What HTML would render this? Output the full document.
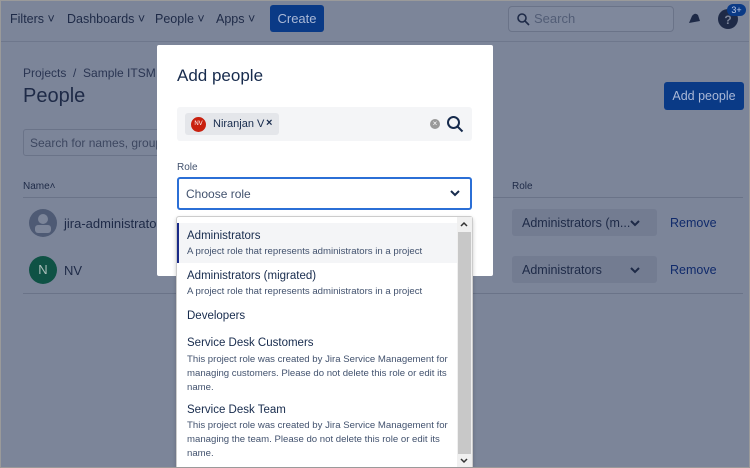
<!DOCTYPE html>
<html><head><style>
*{box-sizing:border-box;margin:0;padding:0}
html,body{width:750px;height:468px;overflow:hidden}
body{background:#7c8599;font-family:"Liberation Sans",sans-serif;color:#172b4d;position:relative}
.a{position:absolute;white-space:nowrap}
.nav{font-size:12.5px;color:#1e2a47}
.dim{color:#1e2a47}
.d{font-size:9.6px;color:#42526e}
</style></head><body>
<div class="a" style="left:0;top:0;width:750px;height:468px;border:1px solid #9a9a9a;z-index:9"></div>
<div class="a" style="left:0;top:41px;width:750px;height:1px;background:#6e778c"></div>
<div class="a nav" style="left:10px;top:12px">Filters ˅</div>
<div class="a nav" style="left:67px;top:12px">Dashboards ˅</div>
<div class="a nav" style="left:155px;top:12px">People ˅</div>
<div class="a nav" style="left:216px;top:12px">Apps ˅</div>
<div class="a" style="left:270px;top:5px;width:54px;height:27px;background:#0a3a86;border-radius:3px;color:#aab8d6;font-size:13px;text-align:center;line-height:27px">Create</div>
<div class="a" style="left:508px;top:6px;width:166px;height:26px;border:1px solid #6a7388;border-radius:4px;background:#7f889c"></div>
<svg class="a" style="left:516px;top:12px" width="14" height="14"><circle cx="6" cy="6" r="4" fill="none" stroke="#1e2a47" stroke-width="1.6"/><path d="M9 9l4 4" stroke="#1e2a47" stroke-width="1.6"/></svg>
<div class="a" style="left:534px;top:11px;font-size:13px;color:#525d76">Search</div>
<svg class="a" style="left:686px;top:11px" width="16" height="16"><path d="M3 12 L6 5 Q9 1 12 4 L14 10 Z M4 13 L7 15 Z" fill="#1e2a47"/></svg>
<div class="a" style="left:718px;top:9px;width:20px;height:20px;border-radius:50%;background:#1e2a47;color:#7c8599;font-size:12px;font-weight:bold;text-align:center;line-height:22px">?</div>
<div class="a" style="left:727px;top:4px;width:19px;height:12px;border-radius:6px;background:#0a3a86;color:#bfcbe6;font-size:9px;text-align:center;line-height:12px">3+</div>
<div class="a dim" style="left:23px;top:66px;font-size:12px;color:#2a3552">Projects &nbsp;/ &nbsp;Sample ITSM P</div>
<div class="a dim" style="left:23px;top:85px;font-size:20px">People</div>
<div class="a" style="left:23px;top:129px;width:150px;height:27px;border:1px solid #6a7388;border-radius:3px"></div>
<div class="a" style="left:30px;top:136px;font-size:12px;color:#3d4760">Search for names, groups</div>
<div class="a dim" style="left:23px;top:181px;font-size:10px">Name˄</div>
<div class="a dim" style="left:512px;top:181px;font-size:10px">Role</div>
<div class="a" style="left:23px;top:197px;width:720px;height:1px;background:#6a7388"></div>
<div class="a" style="left:23px;top:293px;width:720px;height:1px;background:#6a7388"></div>
<div class="a" style="left:29px;top:209px;width:28px;height:28px;border-radius:50%;background:#4e5a74"></div>
<div class="a" style="left:38px;top:214px;width:10px;height:10px;border-radius:50%;background:#7c8599"></div>
<div class="a" style="left:35px;top:225px;width:16px;height:8px;border-radius:3px;background:#7c8599"></div>
<div class="a dim" style="left:64px;top:216px;font-size:13px">jira-administrators</div>
<div class="a" style="left:29px;top:256px;width:28px;height:28px;border-radius:50%;background:#0f5245;color:#a9bdb9;font-size:13px;text-align:center;line-height:28px">N</div>
<div class="a dim" style="left:64px;top:263px;font-size:13px">NV</div>
<div class="a" style="left:512px;top:209px;width:145px;height:27px;background:#737c91;border-radius:3px"></div>
<div class="a dim" style="left:522px;top:216px;font-size:12.5px">Administrators (m...</div>
<div class="a" style="left:512px;top:256px;width:145px;height:27px;background:#737c91;border-radius:3px"></div>
<div class="a dim" style="left:522px;top:263px;font-size:12.5px">Administrators</div>
<svg class="a" style="left:630px;top:219px" width="10" height="8"><path d="M1 2l4 4 4-4" fill="none" stroke="#1e2a47" stroke-width="2"/></svg>
<svg class="a" style="left:630px;top:266px" width="10" height="8"><path d="M1 2l4 4 4-4" fill="none" stroke="#1e2a47" stroke-width="2"/></svg>
<div class="a" style="left:670px;top:216px;font-size:12.5px;color:#102a6b">Remove</div>
<div class="a" style="left:670px;top:263px;font-size:12.5px;color:#102a6b">Remove</div>
<div class="a" style="left:664px;top:82px;width:80px;height:28px;background:#0a3a86;border-radius:3px;color:#aab8d6;font-size:12.5px;text-align:center;line-height:28px">Add people</div>

<div class="a" style="left:157px;top:45px;width:336px;height:231px;background:#fff;border-radius:2px"></div>
<div class="a" style="left:177px;top:66px;font-size:17px;color:#172b4d">Add people</div>
<div class="a" style="left:177px;top:107px;width:295px;height:34px;background:#f4f5f7;border-radius:3px"></div>
<div class="a" style="left:185px;top:113px;width:94px;height:22px;background:#e4e6ea;border-radius:3px"></div>
<div class="a" style="left:191px;top:117px;width:15px;height:15px;border-radius:50%;background:#c9210f;color:#fff;font-size:6px;text-align:center;line-height:15px">NV</div>
<div class="a" style="left:213px;top:118px;font-size:11px;color:#172b4d">Niranjan V</div>
<div class="a" style="left:266px;top:117px;font-size:11px;font-weight:bold">×</div>
<div class="a" style="left:430px;top:119px;width:10px;height:10px;border-radius:50%;background:#999;color:#fff;font-size:8px;line-height:10px;text-align:center">×</div>
<svg class="a" style="left:446px;top:115px" width="18" height="18"><circle cx="7.5" cy="7.5" r="5.5" fill="none" stroke="#172b4d" stroke-width="2"/><path d="M11.5 11.5l5 5" stroke="#172b4d" stroke-width="2"/></svg>
<div class="a" style="left:177px;top:162px;font-size:10px;color:#42526e">Role</div>
<div class="a" style="left:177px;top:177px;width:295px;height:33px;border:2px solid #2b6fd6;border-radius:3px"></div>
<div class="a" style="left:186px;top:187px;font-size:12px;color:#42526e">Choose role</div>
<svg class="a" style="left:450px;top:189px" width="10" height="8"><path d="M1 2l4 4 4-4" fill="none" stroke="#172b4d" stroke-width="2"/></svg>

<div class="a" style="left:176px;top:216px;width:297px;height:260px;background:#fff;border:1px solid #ccc;border-radius:3px;box-shadow:0 2px 4px rgba(0,0,0,.2)"></div>
<div class="a" style="left:457px;top:217px;width:15px;height:251px;background:#f0f0f0"></div>
<div class="a" style="left:458px;top:232px;width:13px;height:222px;background:#c8c8c8"></div>
<svg class="a" style="left:460px;top:221px" width="8" height="6"><path d="M1 5l3-3 3 3" fill="none" stroke="#333" stroke-width="1.5"/></svg>
<svg class="a" style="left:460px;top:458px" width="8" height="6"><path d="M1 1l3 3 3-3" fill="none" stroke="#333" stroke-width="1.5"/></svg>
<div class="a" style="left:177px;top:223px;width:280px;height:40px;background:#f4f5f7;border-left:2px solid #1a2b88"></div>
<div class="a" style="left:187px;top:230px;font-size:11.5px">Administrators</div>
<div class="a d" style="left:187px;top:246px">A project role that represents administrators in a project</div>
<div class="a" style="left:187px;top:270px;font-size:11.5px">Administrators (migrated)</div>
<div class="a d" style="left:187px;top:286px">A project role that represents administrators in a project</div>
<div class="a" style="left:187px;top:310px;font-size:11.5px">Developers</div>
<div class="a" style="left:187px;top:337px;font-size:11.5px">Service Desk Customers</div>
<div class="a d" style="left:187px;top:353px;line-height:14px;white-space:normal;width:268px">This project role was created by Jira Service Management for managing customers. Please do not delete this role or edit its name.</div>
<div class="a" style="left:187px;top:404px;font-size:11.5px">Service Desk Team</div>
<div class="a d" style="left:187px;top:419px;line-height:14px;white-space:normal;width:268px">This project role was created by Jira Service Management for managing the team. Please do not delete this role or edit its name.</div>
</body></html>
